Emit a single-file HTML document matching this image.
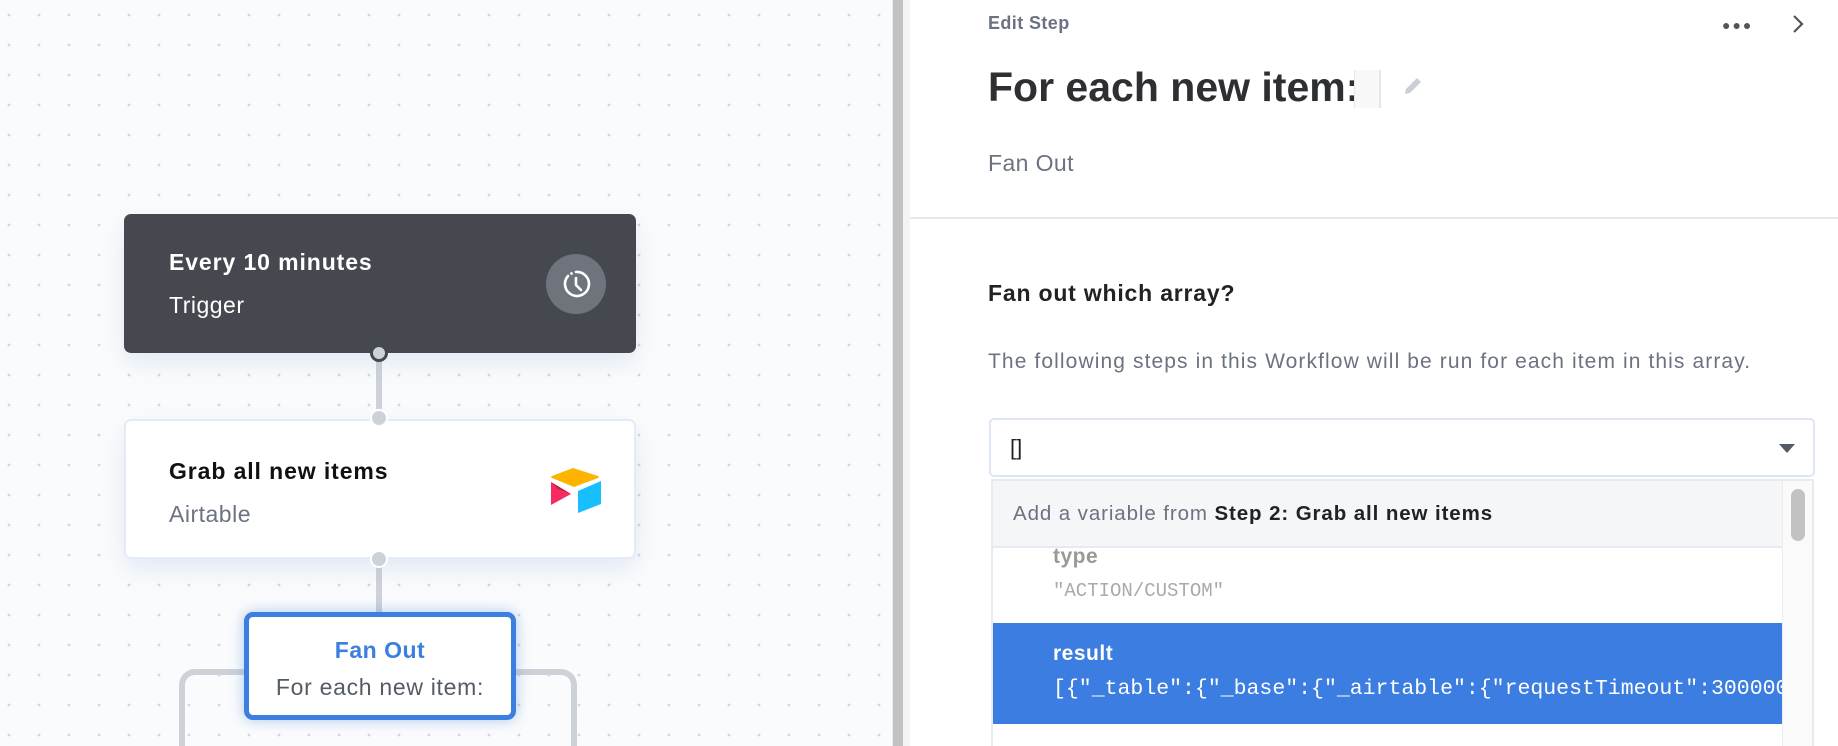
<!DOCTYPE html>
<html style="overflow:hidden;width:1838px;height:746px"><head><meta charset="utf-8"><style>
*{margin:0;padding:0;box-sizing:border-box}
body{width:1838px;height:746px;overflow:hidden;font-family:"Liberation Sans",sans-serif;background:#fff;position:relative}
.canvas{position:absolute;left:0;top:0;width:893px;height:746px;background-color:#fafbfc;background-image:radial-gradient(circle,#d3d7dc 1.2px,transparent 1.6px);background-size:30px 30px;background-position:-6px 0px;border-right:1px solid #e6e9ee}
.bar{position:absolute;left:893px;top:0;width:10px;height:746px;background:#c2c2c2}
.bar2{position:absolute;left:903px;top:0;width:7px;height:746px;background:#f3f4f6}
.a{position:absolute}
.card{position:absolute;left:124px;width:512px;border-radius:7px}
.t1{font-weight:bold;font-size:23px;letter-spacing:0.9px}
.t2{font-size:23px;letter-spacing:0.5px}
.dot{position:absolute;width:18px;height:18px;border-radius:50%;background:#cdd2d9}
.line{position:absolute;left:376px;width:6px;background:#cdd2d9}
.panel{position:absolute;left:910px;top:0;width:928px;height:746px;background:#fff;overflow:hidden}
</style></head><body>
<div class="canvas"></div>
<div class="bar"></div><div class="bar2"></div>

<div class="a" style="left:179px;top:669px;width:398px;height:77px;border:6px solid #cdd2d9;border-bottom:none;border-radius:16px 16px 0 0"></div>

<div class="line" style="top:353px;height:66px"></div>
<div class="line" style="top:559px;height:56px"></div>

<div class="card" style="top:214px;height:139px;background:#45484e;box-shadow:0 10px 24px rgba(120,150,210,.18)">
  <div class="a t1" style="left:45px;top:35px;color:#fff">Every 10 minutes</div>
  <div class="a t2" style="left:45px;top:78px;color:#fff">Trigger</div>
  <div class="a" style="left:422px;top:40px;width:60px;height:60px;border-radius:50%;background:#6f747c">
    <svg width="60" height="60" viewBox="0 0 60 60"><path d="M22 22 A12 12 0 1 0 30 18" fill="none" stroke="#fff" stroke-width="2.6" stroke-linecap="round"/><path d="M30 24 V31 L35 36" fill="none" stroke="#fff" stroke-width="2.6" stroke-linecap="round" stroke-linejoin="round"/><circle cx="25.5" cy="19.5" r="1.4" fill="#fff"/></svg>
  </div>
</div>
<div class="dot" style="left:370px;top:344px;background:#cdd2d9;border:3px solid #45484e"></div>

<div class="card" style="top:419px;height:140px;background:#fff;border:2px solid #e3ebf7;box-shadow:0 10px 24px rgba(120,150,210,.18)">
  <div class="a t1" style="left:43px;top:37px;color:#111">Grab all new items</div>
  <div class="a t2" style="left:43px;top:80px;color:#6b7280">Airtable</div>
  <svg class="a" style="left:423px;top:46px" width="56" height="48" viewBox="0 0 56 48"><path d="M24 1 L3 9 Q1 10 3 11 L25 20 L49 11 Q51 10 49 9 Z" fill="#fcb400"/><path d="M29 24 L29 46 L52 37 L52 14 Z" fill="#18bfff"/><path d="M2 15 L2 38 L22 27 Z" fill="#f82b60"/><path d="M2 15 L22 27 L9 22 Z" fill="#ba1e45"/></svg>
</div>
<div class="dot" style="left:370px;top:409px;border:2px solid #fff"></div>
<div class="dot" style="left:370px;top:550px;border:2px solid #fff"></div>

<div class="a" style="left:244px;top:612px;width:272px;height:108px;background:#fff;border:5px solid #3b7fe0;border-radius:9px;box-shadow:0 0 14px rgba(59,127,224,.4);text-align:center">
  <div style="margin-top:20px;font-size:23px;font-weight:bold;color:#3b7fe0;letter-spacing:0.5px">Fan Out</div>
  <div style="margin-top:10px;font-size:23px;color:#555b64;letter-spacing:0.7px">For each new item:</div>
</div>

<div class="panel">
  <div class="a" style="left:78px;top:13px;font-size:18px;font-weight:bold;color:#6b7280;letter-spacing:0.4px">Edit Step</div>
  <div class="a" style="left:812px;top:17px;font-size:14px;letter-spacing:2px;color:#555">●●●</div>
  <svg class="a" style="left:880px;top:13px" width="16" height="22"><path d="M4 3 L12 11 L4 19" fill="none" stroke="#555" stroke-width="2.2"/></svg>
  <div class="a" style="left:78px;top:64px;font-size:41px;font-weight:bold;color:#2d2f33">For each new item:</div>
  <div class="a" style="left:444px;top:70px;width:27px;height:38px;background:#f8f8f9;border-left:1px solid #e6e6e6;border-right:2px solid #e6e6e6"></div>
  <svg class="a" style="left:492px;top:75px" width="22" height="22" viewBox="0 0 22 22"><path d="M3 19 L4 14 L15 3 L19 7 L8 18 Z" fill="#c9cfd7"/></svg>
  <div class="a" style="left:78px;top:150px;font-size:23px;color:#6b7280;letter-spacing:0.4px">Fan Out</div>
  <div class="a" style="left:0;top:217px;width:928px;height:2px;background:#e2e8f0"></div>
  <div class="a" style="left:78px;top:280px;font-size:23px;font-weight:bold;color:#222;letter-spacing:0.8px">Fan out which array?</div>
  <div class="a" style="left:78px;top:350px;font-size:21px;color:#6b7280;letter-spacing:1.1px;white-space:nowrap">The following steps in this Workflow will be run for each item in this array.</div>
  <div class="a" style="left:79px;top:418px;width:826px;height:59px;border:2px solid #dde6f2;border-radius:5px">
    <div class="a" style="left:19px;top:15px;font-size:22px;color:#222">[]</div>
    <svg class="a" style="left:787px;top:23px" width="18" height="11"><path d="M1 1 L17 1 L9 10 Z" fill="#555b64"/></svg>
  </div>
  <div class="a" style="left:81px;top:479px;width:823px;height:270px;border:2px solid #e6ebf1;background:#fff;overflow:hidden">
    <div class="a" style="left:0;top:0;width:789px;height:67px;background:#f4f6f8;border-bottom:2px solid #e6ebf1"></div>
    <div class="a" style="left:20px;top:21px;font-size:20.5px;color:#6b7280;letter-spacing:0.9px;white-space:nowrap">Add a variable from <b style="color:#222">Step 2: Grab all new items</b></div>
    <div class="a" style="left:60px;top:64px;font-size:21px;font-weight:bold;color:#999;letter-spacing:0.5px">type</div>
    <div class="a" style="left:60px;top:99px;font-family:'Liberation Mono',monospace;font-size:19px;color:#aaa">"ACTION/CUSTOM"</div>
    <div class="a" style="left:0;top:142px;width:789px;height:101px;background:#3b7de0;overflow:hidden">
      <div class="a" style="left:60px;top:19px;font-size:21px;font-weight:bold;color:#fff;letter-spacing:0.5px">result</div>
      <div class="a" style="left:60px;top:54px;font-family:'Liberation Mono',monospace;font-size:21.5px;color:#fff;white-space:nowrap">[{"_table":{"_base":{"_airtable":{"requestTimeout":300000</div>
    </div>
    <div class="a" style="left:789px;top:0;width:32px;height:270px;background:#fafafa;border-left:1px solid #ececec"></div>
    <div class="a" style="left:798px;top:8px;width:14px;height:52px;border-radius:7px;background:#c2c2c2"></div>
  </div>
</div>
</body></html>
